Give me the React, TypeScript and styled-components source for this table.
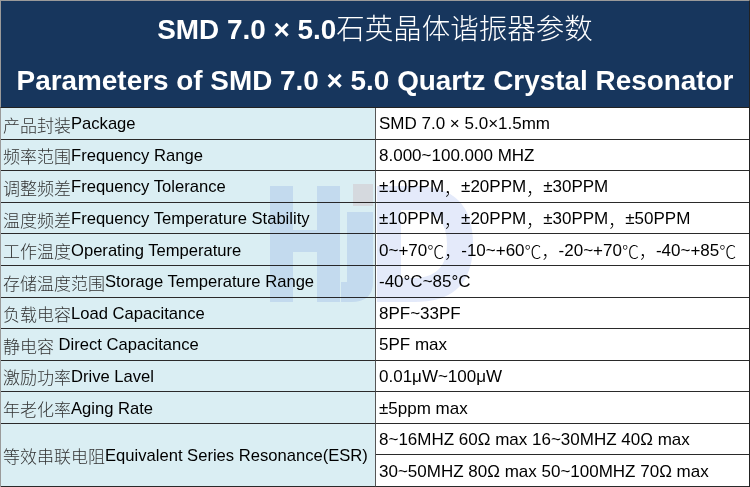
import React from "react";
import styled, { createGlobalStyle } from "styled-components";

const Global = createGlobalStyle`
  html, body { margin: 0; padding: 0; background: #fff; }
  body { font-family: "Liberation Sans", Arial, sans-serif; }
`;

const Sheet = styled.div`
  position: relative;
  width: 750px;
  height: 487px;
  box-sizing: border-box;
  display: flex;
  flex-direction: column;
  overflow: hidden;
`;

const Header = styled.header`
  height: 108px;
  box-sizing: border-box;
  background: #17365d;
  border-top: 1px solid #9a9a9a;
  border-left: 1px solid #9a9a9a;
  border-right: 1px solid #222;
  border-bottom: 1px solid #222;
  display: flex;
  flex-direction: column;
  align-items: center;
  justify-content: center;
  gap: 19px;
  color: #fff;
`;

const Title = styled.h1`
  margin: 0;
  font-family: "Liberation Sans", Arial, "Noto Sans CJK SC", sans-serif;
  font-weight: 700;
  font-size: 27.9px;
  line-height: 32px;
  white-space: nowrap;
`;

const TitleCjk = styled.span`
  font-family: "Noto Sans CJK SC", sans-serif;
  font-weight: 300;
  font-size: 28.5px;
`;

const Thin = styled.span`
  font-family: "Noto Sans CJK SC", sans-serif;
  font-weight: 300;
`;

const Grid = styled.div`
  flex: 1;
  display: grid;
  grid-template-columns: 375px 1fr;
  grid-template-rows: repeat(12, 1fr);
  border-left: 1px solid #9a9a9a;
  border-right: 1px solid #222;
`;

const Cell = styled.div<{ $label?: boolean; $span?: number }>`
  grid-row: span ${(p) => p.$span ?? 1};
  display: flex;
  align-items: center;
  box-sizing: border-box;
  padding-left: ${(p) => (p.$label ? 2 : 3)}px;
  padding-top: 2px;
  background: ${(p) => (p.$label ? "#daeef3" : "#ffffff")};
  border-bottom: 1px solid #2a2a2a;
  border-right: ${(p) => (p.$label ? "1px solid #555" : "none")};
  font-size: ${(p) => (p.$label ? 16.6 : 17)}px;
  color: #000;
  white-space: nowrap;
  overflow: hidden;
`;

const LabelCjk = styled.span`
  font-family: "Noto Sans CJK SC", sans-serif;
  font-weight: 300;
  font-size: 17px;
  color: #333;
`;

const Mark = styled.svg`
  position: absolute;
  left: 265px;
  top: 182px;
  width: 210px;
  height: 124px;
  pointer-events: none;
  mix-blend-mode: multiply;
`;

const rows: [string, string, string][] = [
  ["产品封装", "Package", "SMD 7.0 × 5.0×1.5mm"],
  ["频率范围", "Frequency Range", "8.000~100.000 MHZ"],
  ["调整频差", "Frequency Tolerance", "±10PPM，±20PPM，±30PPM"],
  ["温度频差", "Frequency Temperature Stability", "±10PPM，±20PPM，±30PPM，±50PPM"],
  ["工作温度", "Operating Temperature", "0~+70℃，-10~+60℃，-20~+70℃，-40~+85℃"],
  ["存储温度范围", "Storage Temperature Range", "-40°C~85°C"],
  ["负载电容", "Load Capacitance", "8PF~33PF"],
  ["静电容", " Direct Capacitance", "5PF max"],
  ["激励功率", "Drive Lavel", "0.01μW~100μW"],
  ["年老化率", "Aging Rate", "±5ppm max"],
];

const ValueText = ({ text }: { text: string }) => {
  const parts = text.split(/([，℃])/);
  return (
    <>
      {parts.map((p, i) =>
        p === "，" || p === "℃" ? <Thin key={i}>{p}</Thin> : <span key={i}>{p}</span>
      )}
    </>
  );
};

export default function App() {
  return (
    <>
      <Global />
      <Sheet>
        <Header>
          <Title>
            SMD 7.0 × 5.0<TitleCjk>石英晶体谐振器参数</TitleCjk>
          </Title>
          <Title>Parameters of SMD 7.0 × 5.0 Quartz Crystal Resonator</Title>
        </Header>
        <Grid>
          {rows.map(([zh, en, val]) => (
            <React.Fragment key={en}>
              <Cell $label>
                <LabelCjk>{zh}</LabelCjk>
                <span style={{ whiteSpace: "pre" }}>{en}</span>
              </Cell>
              <Cell>
                <ValueText text={val} />
              </Cell>
            </React.Fragment>
          ))}
          <Cell $label $span={2}>
            <LabelCjk>等效串联电阻</LabelCjk>
            <span>Equivalent Series Resonance(ESR)</span>
          </Cell>
          <Cell>8~16MHZ 60Ω max 16~30MHZ 40Ω max</Cell>
          <Cell>30~50MHZ 80Ω max 50~100MHZ 70Ω max</Cell>
        </Grid>
        <Mark viewBox="0 0 210 124">
          <g fill="#8fa6ea" opacity="0.24">
            <rect x="5" y="4" width="23" height="116" />
            <rect x="52" y="4" width="23" height="116" />
            <rect x="28" y="48" width="24" height="22" />
            <path d="M82 30 h26 v70 q0 20 -22 20 h-10 v-20 h6 q0 0 0 -4 z" />
            <path d="M112 4 h38 q58 0 58 58 q0 58 -58 58 h-38 z M136 28 v68 h12 q34 0 34 -34 q0 -34 -34 -34 z" fillRule="evenodd" />
          </g>
          <rect x="88" y="2" width="20" height="22" fill="#e79a9a" opacity="0.22" />
        </Mark>
      </Sheet>
    </>
  );
}
